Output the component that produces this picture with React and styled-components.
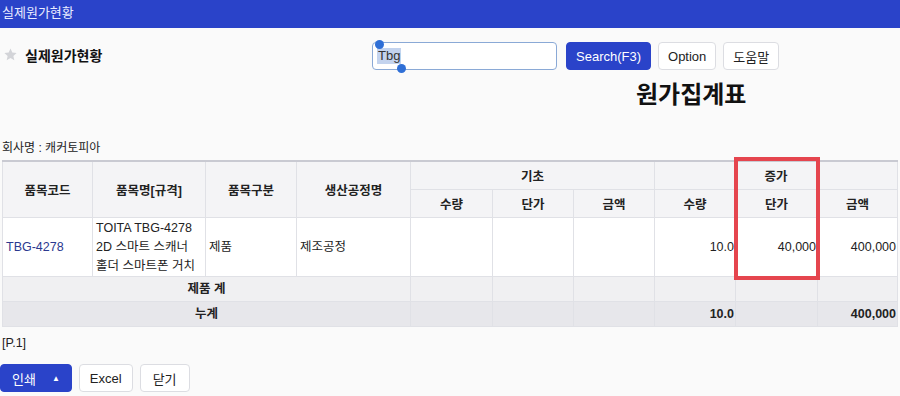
import React from 'react';
import styled, { createGlobalStyle } from 'styled-components';

const GlobalStyle = createGlobalStyle`
  html, body {
    margin: 0;
    padding: 0;
    background: #fafafa;
    font-family: "Liberation Sans", "Noto Sans CJK KR", sans-serif;
    color: #222;
    font-size: 13px;
  }
`;

const TopBar = styled.div`
  height: 28px;
  background: #2a43c9;
  color: #e8ecff;
  font-size: 13px;
  line-height: 26px;
  padding-left: 2px;
`;

const HeaderRow = styled.div`
  display: flex;
  align-items: center;
  height: 28px;
  margin-top: 14px;
`;

const PageTitle = styled.div`
  width: 372px;
  display: flex;
  align-items: center;
  gap: 5px;
  box-sizing: border-box;
  font-size: 14px;
  font-weight: bold;
  color: #111;
  margin-top: -3px;
`;

const Star = styled.span`
  width: 20px;
  display: flex;
  justify-content: center;
`;

const SearchBox = styled.div`
  position: relative;
  width: 185px;
  height: 28px;
  box-sizing: border-box;
  border: 1px solid #8aa9d6;
  border-radius: 4px;
  background: #fff;
  display: flex;
  align-items: center;
  padding-left: 4px;
`;

const Selected = styled.span`
  background: #c3d3ee;
  color: #333;
  font-size: 13px;
  line-height: 16px;
  padding: 0 1px;
`;

const Handle = styled.span`
  position: absolute;
  width: 9px;
  height: 9px;
  border-radius: 50%;
  background: #2f6fd6;
  left: ${p => p.left}px;
  top: ${p => p.top}px;
`;

const Button = styled.button`
  height: 28px;
  box-sizing: border-box;
  padding: 0 ${p => p.pad || 11}px;
  border-radius: 4px;
  font-family: inherit;
  font-size: 13px;
  cursor: pointer;
  border: 1px solid ${p => (p.primary ? '#2a43c9' : '#dcdde2')};
  background: ${p => (p.primary ? '#2a43c9' : '#fff')};
  color: ${p => (p.primary ? '#fff' : '#222')};
  display: inline-flex;
  align-items: center;
  justify-content: center;
  gap: 16px;
`;

const ButtonGroup = styled.div`
  display: flex;
  gap: ${p => p.gap || 7}px;
  margin-left: ${p => p.ml || 0}px;
`;

const ReportTitle = styled.h1`
  margin: 10px 0 0 636px;
  font-size: 24px;
  font-weight: bold;
  color: #111;
  line-height: 30px;
`;

const Company = styled.div`
  margin: 30px 0 0 2px;
  font-size: 12px;
  line-height: 16px;
  color: #222;
`;

const TableWrap = styled.div`
  position: relative;
  margin: 4px 0 0 2px;
  width: 895px;
`;

const Table = styled.table`
  border-collapse: collapse;
  table-layout: fixed;
  width: 895px;
  font-size: 12.5px;
  border-top: 2px solid #c9cad2;
`;

const Th = styled.th`
  background: #f4f4f6;
  border: 1px solid #e0e1e6;
  font-weight: bold;
  color: #222;
  height: 27px;
  padding: 0;
`;

const Td = styled.td`
  border: 1px solid #e0e1e6;
  background: ${p => p.bg || '#fff'};
  text-align: ${p => p.align || 'left'};
  font-weight: ${p => (p.bold ? 'bold' : 'normal')};
  color: ${p => p.color || '#222'};
  height: ${p => p.h || 24}px;
  padding: 0 ${p => (p.align === 'right' ? 1 : 3)}px 0 3px;
  line-height: 19px;
  vertical-align: middle;
  word-break: ${p => (p.wrapAll ? 'break-all' : 'normal')};
`;

const Highlight = styled.div`
  position: absolute;
  left: 732px;
  top: -3px;
  width: 86px;
  height: 123px;
  box-sizing: border-box;
  border: 4px solid #e5454e;
  pointer-events: none;
`;

const PageNo = styled.div`
  margin: 8px 0 0 2px;
  font-size: 12.5px;
  line-height: 16px;
`;

const Footer = styled.div`
  display: flex;
  gap: 7px;
  margin-top: 13px;
`;

const Caret = styled.span`
  font-size: 8px;
`;

const widths = [90, 113, 91, 114, 82, 81, 81, 81, 82, 80];

const StarIcon = () => (
  <svg width="15" height="15" viewBox="0 0 24 24">
    <path d="M12 2.5l2.9 6.3 6.9.7-5.2 4.7 1.5 6.8L12 17.5l-6.1 3.5 1.5-6.8L2.2 9.5l6.9-.7z" fill="#d3d4d8" />
  </svg>
);

export default function App() {
  const gray1 = '#f0f0f2';
  const gray2 = '#e7e7eb';
  return (
    <>
      <GlobalStyle />
      <TopBar>실제원가현황</TopBar>
      <HeaderRow>
        <PageTitle>
          <Star><StarIcon /></Star>
          실제원가현황
        </PageTitle>
        <SearchBox>
          <Selected>Tbg</Selected>
          <Handle left={2} top={-3} />
          <Handle left={24} top={21} />
        </SearchBox>
        <ButtonGroup ml={9} gap={7}>
          <Button primary pad={9}>Search(F3)</Button>
          <Button pad={9}>Option</Button>
          <Button pad={9}>도움말</Button>
        </ButtonGroup>
      </HeaderRow>
      <ReportTitle>원가집계표</ReportTitle>
      <Company>회사명 : 캐커토피아</Company>
      <TableWrap>
        <Table>
          <colgroup>
            {widths.map((w, i) => <col key={i} style={{ width: w }} />)}
          </colgroup>
          <thead>
            <tr>
              <Th rowSpan={2}>품목코드</Th>
              <Th rowSpan={2}>품목명[규격]</Th>
              <Th rowSpan={2}>품목구분</Th>
              <Th rowSpan={2}>생산공정명</Th>
              <Th colSpan={3}>기초</Th>
              <Th colSpan={3}>증가</Th>
            </tr>
            <tr>
              <Th>수량</Th>
              <Th>단가</Th>
              <Th>금액</Th>
              <Th>수량</Th>
              <Th>단가</Th>
              <Th>금액</Th>
            </tr>
          </thead>
          <tbody>
            <tr>
              <Td h={58} color="#2b3990">TBG-4278</Td>
              <Td h={58} wrapAll>TOITA TBG-4278 2D 스마트 스캐너 홀더 스마트폰 거치</Td>
              <Td h={58}>제품</Td>
              <Td h={58}>제조공정</Td>
              <Td h={58} />
              <Td h={58} />
              <Td h={58} />
              <Td h={58} align="right">10.0</Td>
              <Td h={58} align="right">40,000</Td>
              <Td h={58} align="right">400,000</Td>
            </tr>
            <tr>
              <Td colSpan={4} bg={gray1} align="center" bold>제품 계</Td>
              {[0, 1, 2, 3, 4, 5].map(i => <Td key={i} bg={gray1} />)}
            </tr>
            <tr>
              <Td colSpan={4} bg={gray2} align="center" bold>누계</Td>
              <Td bg={gray2} />
              <Td bg={gray2} />
              <Td bg={gray2} />
              <Td bg={gray2} align="right" bold>10.0</Td>
              <Td bg={gray2} />
              <Td bg={gray2} align="right" bold>400,000</Td>
            </tr>
          </tbody>
        </Table>
        <Highlight />
      </TableWrap>
      <PageNo>[P.1]</PageNo>
      <Footer>
        <Button primary pad={11}>인쇄<Caret>▲</Caret></Button>
        <Button pad={10}>Excel</Button>
        <Button pad={12}>닫기</Button>
      </Footer>
    </>
  );
}
